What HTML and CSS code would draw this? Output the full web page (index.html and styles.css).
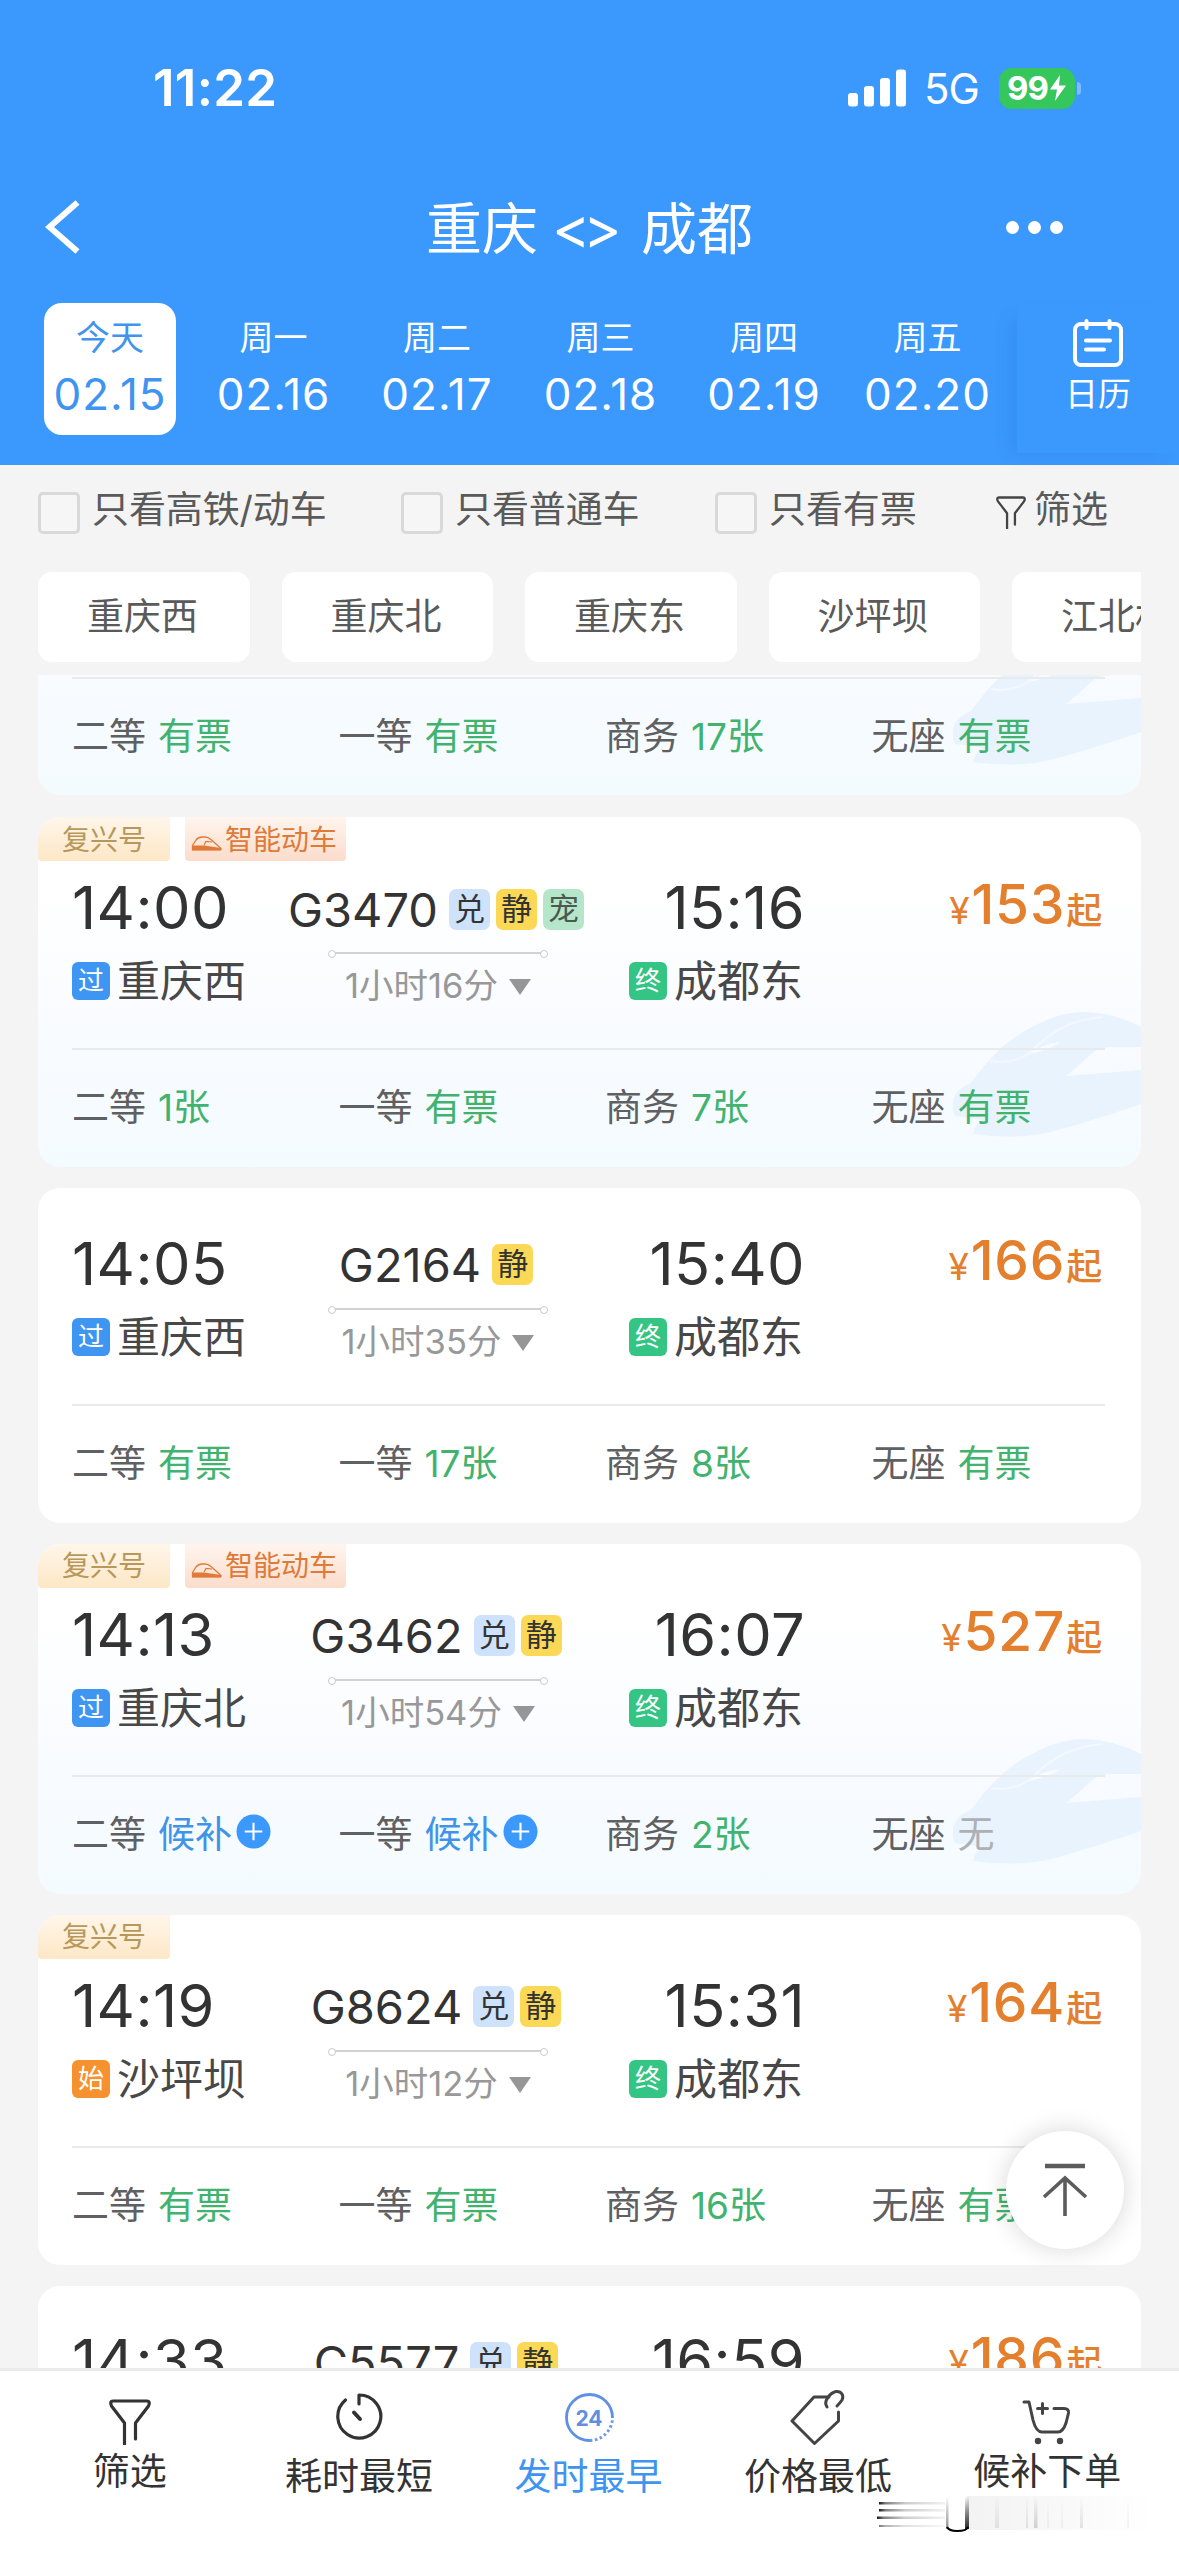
FILE: index.html
```html
<!DOCTYPE html>
<html lang="zh-CN">
<head>
<meta charset="utf-8">
<title>重庆 - 成都 车票</title>
<link rel="stylesheet" href="styles.css">
</head>
<body>
<svg class="defs" width="0" height="0">
  <symbol id="funnel" viewBox="0 0 42 46">
    <path d="M15.500 45V24L2.500 7Q0.500 2 4 2H38Q41.500 2 39.500 7L26.500 24V40" fill="none" stroke="currentColor" stroke-width="3.200" stroke-linecap="round" stroke-linejoin="round"/>
  </symbol>
  <symbol id="mini-train" viewBox="0 0 31 15">
    <path d="M1.500 13.500V9.500L5 4Q7.500 1 11 1H14Q17 1 20 3.500L30 12.500V13.500Z" fill="none" stroke="currentColor" stroke-width="1.300" stroke-linejoin="round"/>
    <path d="M1 9.500H13L30 12V14.500H1Z" fill="currentColor"/>
    <path d="M13 9L15 5.500L21 6" fill="none" stroke="currentColor" stroke-width="1.200"/>
  </symbol>
  <symbol id="bullet-train" viewBox="0 0 188 126">
    <path d="M0 88Q4 76 18 71Q30 54 47 37Q66 20 85 12Q108 0 131 0Q162 1 188 15V35H158Q146 35 138 42Q128 52 113 64L188 58V92Q142 108 98 120Q64 128 20 122Q22 112 30 108L2 104Q-2 96 0 88Z" fill="#e9f3fe"/>
    <path d="M38 49Q62 53 80 38Q108 8 150 5" fill="none" stroke="#f3f8ff" stroke-width="2"/>
    <path d="M76 42Q88 32 108 30Q96 38 76 42Z" fill="#f8fbff"/>
  </symbol>
  <symbol id="plus-dot" viewBox="0 0 36 36">
    <circle cx="18" cy="18" r="17.500" fill="#3b98fc"/>
    <path d="M9 18H27M18 9V27" stroke="#fff" stroke-width="2.200"/>
  </symbol>
</svg>

<div class="screen">
  <header class="header">
    <div class="status">
      <span class="clock">11:22</span>
      <div class="status-right">
        <svg class="signal" viewBox="0 0 58 38"><g fill="#fff"><rect x="0" y="24" width="10" height="13.500" rx="3"/><rect x="16" y="17" width="10" height="20.500" rx="3"/><rect x="32" y="9" width="10" height="28.500" rx="3"/><rect x="48" y="0.500" width="10" height="37" rx="3"/></g></svg>
        <span class="network">5G</span>
        <div class="battery"><span>99</span><svg viewBox="0 0 18 26"><path d="M11 0L1 14.500H8L6 26L17 10.500H10Z" fill="#fff"/></svg></div>
        <i class="nub"></i>
      </div>
    </div>
    <div class="titlebar">
      <svg class="back" viewBox="0 0 36 54"><path d="M32.500 2.500L4.500 27L32.500 51.500" fill="none" stroke="#fff" stroke-width="6"/></svg>
      <h1 class="title">重庆<span>&lt;&gt;</span>成都</h1>
      <div class="more"><i></i><i></i><i></i></div>
    </div>
    <div class="dates">
      <div class="date active"><span>今天</span><b>02.15</b></div>
      <div class="date"><span>周一</span><b>02.16</b></div>
      <div class="date"><span>周二</span><b>02.17</b></div>
      <div class="date"><span>周三</span><b>02.18</b></div>
      <div class="date"><span>周四</span><b>02.19</b></div>
      <div class="date"><span>周五</span><b>02.20</b></div>
      <div class="calendar">
        <svg viewBox="0 0 50 48"><g fill="none" stroke="#fff" stroke-width="4" stroke-linecap="round"><rect x="2" y="5" width="46" height="41" rx="6"/><path d="M13.500 2V9M36.500 2V9M13 21.500H37M13 30.500H31"/></g></svg>
        <span>日历</span>
      </div>
    </div>
  </header>

  <div class="filters">
    <label class="check c1"><i></i><span>只看高铁/动车</span></label>
    <label class="check c2"><i></i><span>只看普通车</span></label>
    <label class="check c3"><i></i><span>只看有票</span></label>
    <div class="filter"><svg><use href="#funnel"/></svg><span>筛选</span></div>
  </div>

  <div class="chips">
    <span>重庆西</span><span>重庆北</span><span>重庆东</span><span>沙坪坝</span><span>江北机场</span>
  </div>

  <main class="list">
    <section class="card smart partial">
      <svg class="train-bg"><use href="#bullet-train"/></svg>
      <div class="seats">
        <span>二等 <em>有票</em></span><span>一等 <em>有票</em></span><span>商务 <em>17张</em></span><span>无座 <em>有票</em></span>
      </div>
    </section>

    <section class="card smart">
      <svg class="train-bg"><use href="#bullet-train"/></svg>
      <div class="tags"><span class="tag fx">复兴号</span><span class="tag zn"><svg><use href="#mini-train"/></svg>智能动车</span></div>
      <div class="trip">
        <div class="from"><div class="time">14:00</div><div class="station"><i class="pass">过</i>重庆西</div></div>
        <div class="mid"><div class="no">G3470<i class="dui">兑</i><i class="jing">静</i><i class="chong">宠</i></div><div class="route"></div><div class="dur">1小时16分<u></u></div></div>
        <div class="to"><div class="time">15:16</div><div class="station"><i class="end">终</i>成都东</div></div>
        <div class="price"><small>¥</small>153<span>起</span></div>
      </div>
      <div class="seats">
        <span>二等 <em>1张</em></span><span>一等 <em>有票</em></span><span>商务 <em>7张</em></span><span>无座 <em>有票</em></span>
      </div>
    </section>

    <section class="card plain">
      <div class="trip">
        <div class="from"><div class="time">14:05</div><div class="station"><i class="pass">过</i>重庆西</div></div>
        <div class="mid"><div class="no">G2164<i class="jing">静</i></div><div class="route"></div><div class="dur">1小时35分<u></u></div></div>
        <div class="to"><div class="time">15:40</div><div class="station"><i class="end">终</i>成都东</div></div>
        <div class="price"><small>¥</small>166<span>起</span></div>
      </div>
      <div class="seats">
        <span>二等 <em>有票</em></span><span>一等 <em>17张</em></span><span>商务 <em>8张</em></span><span>无座 <em>有票</em></span>
      </div>
    </section>

    <section class="card smart">
      <svg class="train-bg"><use href="#bullet-train"/></svg>
      <div class="tags"><span class="tag fx">复兴号</span><span class="tag zn"><svg><use href="#mini-train"/></svg>智能动车</span></div>
      <div class="trip">
        <div class="from"><div class="time">14:13</div><div class="station"><i class="pass">过</i>重庆北</div></div>
        <div class="mid"><div class="no">G3462<i class="dui">兑</i><i class="jing">静</i></div><div class="route"></div><div class="dur">1小时54分<u></u></div></div>
        <div class="to"><div class="time">16:07</div><div class="station"><i class="end">终</i>成都东</div></div>
        <div class="price"><small>¥</small>527<span>起</span></div>
      </div>
      <div class="seats">
        <span>二等 <em class="wait">候补<svg><use href="#plus-dot"/></svg></em></span><span>一等 <em class="wait">候补<svg><use href="#plus-dot"/></svg></em></span><span>商务 <em>2张</em></span><span>无座 <em class="none">无</em></span>
      </div>
    </section>

    <section class="card">
      <div class="tags"><span class="tag fx">复兴号</span></div>
      <div class="trip">
        <div class="from"><div class="time">14:19</div><div class="station"><i class="start">始</i>沙坪坝</div></div>
        <div class="mid"><div class="no">G8624<i class="dui">兑</i><i class="jing">静</i></div><div class="route"></div><div class="dur">1小时12分<u></u></div></div>
        <div class="to"><div class="time">15:31</div><div class="station"><i class="end">终</i>成都东</div></div>
        <div class="price"><small>¥</small>164<span>起</span></div>
      </div>
      <div class="seats">
        <span>二等 <em>有票</em></span><span>一等 <em>有票</em></span><span>商务 <em>16张</em></span><span>无座 <em>有票</em></span>
      </div>
    </section>

    <section class="card plain">
      <div class="trip">
        <div class="from"><div class="time">14:33</div></div>
        <div class="mid"><div class="no">C5577<i class="dui">兑</i><i class="jing">静</i></div></div>
        <div class="to"><div class="time">16:59</div></div>
        <div class="price"><small>¥</small>186<span>起</span></div>
      </div>
    </section>
  </main>

  <nav class="tabs">
    <div class="tab high"><svg class="t-funnel"><use href="#funnel"/></svg>筛选</div>
    <div class="tab"><svg viewBox="0 0 50 56"><g fill="none" stroke="#333" stroke-width="3.200" stroke-linecap="round" stroke-linejoin="round"><path d="M11.500 11A21.500 21.500 0 1 0 25 6V15"/><path d="M20 23.500L26 30" stroke-width="4"/></g></svg>耗时最短</div>
    <div class="tab current"><svg viewBox="0 0 50 56"><path d="M48.500 29A23 23 0 1 0 26 51.500" fill="none" stroke="#5f90e6" stroke-width="2.800"/><path d="M26 51.500A23 23 0 0 0 48.500 29" fill="none" stroke="#6f9ae6" stroke-width="3" stroke-dasharray="2.500 2.500"/><text x="25" y="36.500" text-anchor="middle" font-size="21" font-weight="700" fill="#5f8fe0">24</text></svg>发时最早</div>
    <div class="tab"><svg class="t-tag" viewBox="0 0 56 56"><g fill="none" stroke="#444" stroke-width="3" stroke-linecap="round" stroke-linejoin="round"><path d="M39 8H24L2 32L24.500 54.500L48.500 32V23"/><path d="M37 18C33 12 40 4 46 2.500C52 2 54 7 52 11C50 14 48 16 47 17"/></g></svg>价格最低</div>
    <div class="tab high"><svg class="t-cart" viewBox="0 0 50 46"><g fill="none" stroke="#444" stroke-width="3" stroke-linecap="round" stroke-linejoin="round"><path d="M2 3H7L11 21Q14 33 20 33H36Q41 33 44 24L46.500 14Q47 9.500 42 9.500H32"/><path d="M20.500 4.500V14.500M15.500 9.500H25.500"/></g><circle cx="16" cy="42" r="3.200" fill="#444"/><circle cx="38" cy="42" r="3.200" fill="#444"/></svg>候补下单</div>
  </nav>

  <div class="to-top"><svg viewBox="0 0 46 54"><path d="M3 3H43" stroke="#5c5c5c" stroke-width="4.500"/><path d="M23 53V16M2 34L23 15L44 34" fill="none" stroke="#5c5c5c" stroke-width="3.600"/></svg></div>

  <svg class="smear" viewBox="0 0 290 44">
    <defs>
      <linearGradient id="h"><stop offset="0" stop-color="#000" stop-opacity=".9"/><stop offset=".1" stop-color="#000" stop-opacity=".5"/><stop offset=".4" stop-color="#000" stop-opacity=".2"/><stop offset="1" stop-color="#000" stop-opacity=".05"/></linearGradient>
      <linearGradient id="f"><stop offset="0" stop-color="#000" stop-opacity=".05"/><stop offset="1" stop-color="#000" stop-opacity="0"/></linearGradient>
      <linearGradient id="v" x1="0" y1="0" x2="0" y2="1"><stop offset="0" stop-color="#000" stop-opacity="0"/><stop offset=".5" stop-color="#000" stop-opacity=".45"/><stop offset="1" stop-color="#000" stop-opacity=".85"/></linearGradient>
      <linearGradient id="w" x1="0" y1="0" x2="0" y2="1"><stop offset="0" stop-color="#000" stop-opacity="0"/><stop offset="1" stop-color="#000" stop-opacity=".16"/></linearGradient>
    </defs>
    <g fill="url(#h)"><rect x="4" y="11" width="66" height="2.500"/><rect x="4" y="18" width="66" height="2.500"/><rect x="2" y="25.500" width="68" height="2.500"/><rect x="4" y="34" width="66" height="2" opacity=".6"/></g>
    <rect x="92" y="5" width="190" height="34" fill="url(#f)"/>
    <g fill="url(#v)"><rect x="71" y="5" width="2.500" height="33" opacity=".5"/><rect x="90" y="5" width="4" height="33"/></g>
    <path d="M72 36Q74 40 82 40Q92 40 93 36" fill="none" stroke="#000" stroke-width="2"/>
    <g fill="url(#w)"><rect x="120" y="5" width="4" height="32" opacity=".5"/><rect x="151" y="5" width="2" height="32" opacity=".6"/><rect x="159" y="5" width="3.500" height="32"/><rect x="172" y="5" width="2" height="32" opacity=".3"/><rect x="186" y="5" width="2" height="32" opacity=".3"/><rect x="205" y="5" width="3" height="32" opacity=".6"/><rect x="252" y="5" width="2" height="32" opacity=".3"/></g>
  </svg>
</div>
</body>
</html>
```
FILE: styles.css
```css
* { box-sizing: border-box; margin: 0; padding: 0; }
body { width: 1179px; height: 2556px; overflow: hidden; font-family: Inter, "Noto Sans CJK SC", sans-serif; color: #333; background: #f4f4f4; }
i, em, u { font-style: normal; text-decoration: none; }
svg { display: block; flex: none; }
.defs { position: absolute; }
.screen { position: relative; width: 1179px; height: 2556px; display: flex; flex-direction: column; overflow: hidden; }

.header { flex: none; height: 465px; background: #3b98fc; color: #fff; display: flex; flex-direction: column; }
.status { height: 176px; padding: 0 98px 0 153px; display: flex; justify-content: space-between; align-items: center; }
.clock { font-size: 51px; font-weight: 600; letter-spacing: .3px; line-height: 60px; }
.status-right { display: flex; align-items: center; }
.signal { width: 58px; height: 38px; }
.network { font-size: 42px; line-height: 50px; margin-left: 18px; width: 56px; letter-spacing: -1px; padding-top: 1px; }
.battery { margin-left: 19px; width: 76px; height: 41px; border-radius: 13px; background: #35c65c; display: flex; align-items: center; justify-content: center; font-size: 33px; font-weight: 700; letter-spacing: -1px; gap: 1px; }
.battery svg { width: 18px; height: 26px; }
.nub { width: 4px; height: 13px; margin-left: 2px; border-radius: 0 4px 4px 0; background: #7dbcfd; }

.titlebar { height: 104px; padding-bottom: 2px; display: grid; grid-template-columns: 200px 1fr 200px; align-items: center; }
.back { width: 36px; height: 54px; margin-left: 45px; }
.title { font-size: 56px; font-weight: 400; line-height: 70px; display: flex; justify-content: center; padding-top: 3px; white-space: nowrap; }
.title span { font-size: 58px; line-height: 68px; letter-spacing: -7px; width: 103px; padding-right: 7px; text-align: center; }
.title span { padding: 0 0 0 14px; text-align: left; }
.more { display: flex; gap: 9px; margin-left: 27px; }
.more i { width: 13px; height: 13px; border-radius: 50%; background: #fff; }

.dates { margin-top: 23px; padding-left: 44px; display: flex; height: 162px; }
.date { width: 132px; height: 132px; margin-right: 31.500px; border-radius: 18px; display: flex; flex-direction: column; align-items: center; }
.date span { font-size: 34px; line-height: 44px; margin-top: 13px; }
.date b { font-size: 44px; line-height: 54px; font-weight: 400; letter-spacing: 1px; margin: 7px -6px 0; }
.date.active { background: #fff; color: #3f94ef; }
.calendar { flex: 1; margin-left: -8px; height: 150px; padding-top: 16px; display: flex; flex-direction: column; align-items: center; box-shadow: -12px 8px 18px -8px rgba(20, 90, 190, .16); }
.calendar svg { width: 50px; height: 48px; }
.calendar span { font-size: 33px; line-height: 44px; margin-top: 5px; }

.filters { flex: none; height: 95px; padding-left: 38px; display: flex; align-items: center; font-size: 37px; line-height: 50px; color: #5a5a5a; white-space: nowrap; }
.filters span { padding-bottom: 5px; }
.check { display: flex; align-items: center; letter-spacing: -.1px; }
.check i { width: 42px; height: 42px; border: 3px solid #d9d9d9; border-radius: 5px; margin-right: 12px; background: #f6f6f6; }
.c1 { width: 363px; }
.c2 { width: 314px; }
.c3 { width: 281px; }
.filter { display: flex; align-items: center; gap: 8px; }
.filter svg { width: 30px; height: 33px; color: #444; }

.chips { flex: none; height: 115px; margin: 0 38px; padding-top: 12px; overflow: hidden; display: flex; gap: 32px; }
.chips span { flex: none; height: 90px; padding: 0 51.500px 0 49px; border-radius: 14px; background: #fff; font-size: 37px; line-height: 90px; color: #5a5a5a; }

.list { flex: 1; min-height: 0; overflow: hidden; padding: 0 38px; }
.card { position: relative; height: 350px; margin-bottom: 21px; border-radius: 22px; background: #fff; overflow: hidden; display: flex; flex-direction: column; }
.smart { background: linear-gradient(#fff 20%, #f8fbff 65%, #f4fbff); }
.plain { height: 334.500px; padding-top: 28.500px; }
.partial { height: 120px; padding-top: 2px; margin-bottom: 22px; border-radius: 0 0 22px 22px; background: linear-gradient(#f8fbff, #f4fbff); }
.train-bg { position: absolute; right: 0; bottom: 29px; width: 188px; height: 126px; }
.tags { flex: none; height: 44px; display: flex; gap: 15px; }
.tag { height: 44px; display: flex; align-items: center; font-size: 28px; padding-bottom: 3px; border-radius: 0 0 4px 4px; }
.fx { width: 132px; padding-left: 24px; color: #b8985a; background: linear-gradient(#fff6ea, #fde7c6); }
.zn { width: 161px; padding-left: 6px; gap: 3px; color: #df7a38; background: linear-gradient(#fff5ee, #fbdccb); }
.zn svg { width: 31px; height: 15px; margin-top: 12px; }

.trip { position: relative; flex: none; height: 187px; padding: 16px 38px 0 34px; display: grid; grid-template-columns: 212px 308px 211px 300px; }
.time { font-size: 59.500px; line-height: 60px; letter-spacing: .4px; margin-right: -2px; }
.station { display: flex; align-items: center; margin-top: 19px; height: 50px; font-size: 43px; line-height: 50px; color: #484848; white-space: nowrap; }
.station i { width: 38px; height: 38px; margin-right: 7px; border-radius: 6px; color: #fff; font-size: 26px; line-height: 37px; text-align: center; }
.pass { background: #3f95f2; }
.end { background: #34c483; }
.start { background: #f5922f; }
.to { display: flex; flex-direction: column; align-items: flex-end; }
.mid { display: flex; flex-direction: column; align-items: center; }
.no { display: flex; align-items: center; gap: 6px; height: 60px; font-size: 47px; padding-top: 4px; margin-left: -4px; letter-spacing: 0; white-space: nowrap; }
.no i { width: 41px; height: 41px; border-radius: 7px; font-size: 31px; line-height: 39px; text-align: center; }
.no i:first-of-type { margin-left: 5px; }
.dui { background: #cfe2fb; }
.jing { background: #fbd957; }
.chong { background: #b5e6ca; color: #4a5a50; }
.route { width: 208px; height: 2px; margin-top: 15px; background: #d2d2d2; position: relative; }
.route::before, .route::after { content: ""; position: absolute; top: -2px; width: 6px; height: 6px; border: 1.500px solid #cacaca; border-radius: 50%; background: #fff; }
.route::before { left: -6px; }
.route::after { right: -6px; }
.dur { display: flex; align-items: center; gap: 11px; font-size: 34.500px; line-height: 46px; margin-top: 9px; color: #989898; }
.dur u { border: 11px solid transparent; border-top: 16px solid #969696; border-bottom: 0; margin-top: 2px; }
.price { text-align: right; font-size: 55px; line-height: 55px; font-weight: 500; letter-spacing: .8px; color: #e47f2e; white-space: nowrap; }
.price small { font-size: 37px; font-weight: 400; margin-right: 1px; }
.price span { font-size: 36px; margin-left: 1px; }

.seats { position: relative; flex: 1; margin: 0 36px 0 34px; padding-bottom: 7px; border-top: 2px solid #e8eaec; display: grid; grid-template-columns: repeat(4, 266.500px); align-items: center; font-size: 37px; color: #5f6062; white-space: nowrap; }
.seats span { display: flex; align-items: center; gap: 12px; }
.seats em { color: #42b36e; }
.seats .wait { color: #3f94e8; display: flex; align-items: center; gap: 4px; }
.wait svg { width: 35px; height: 35px; }
.seats .none { color: #adb0b4; }

.tabs { flex: none; height: 188px; padding: 0 17px 0 15px; border-top: 3px solid #ebebeb; background: #fff; display: flex; }
.tab { flex: 1; padding-top: 18px; display: flex; flex-direction: column; align-items: center; font-size: 37px; line-height: 50px; color: #333; }
.tab svg { width: 50px; height: 56px; margin-bottom: 7px; }
.tab.current { color: #3f94ef; }
.tab.high { padding-top: 28px; }
.tab.high svg { margin-bottom: 2px; height: 46px; }
.tab .t-funnel { width: 42px; }
.tab .t-tag { width: 56px; }

.to-top { position: absolute; left: 1006px; top: 2131px; width: 118px; height: 118px; border-radius: 50%; background: #fff; box-shadow: 0 0 26px rgba(0, 0, 0, .16); display: flex; align-items: center; justify-content: center; }
.to-top svg { width: 46px; height: 54px; }
.smear { position: absolute; left: 875px; top: 2491px; width: 290px; height: 44px; }
```
